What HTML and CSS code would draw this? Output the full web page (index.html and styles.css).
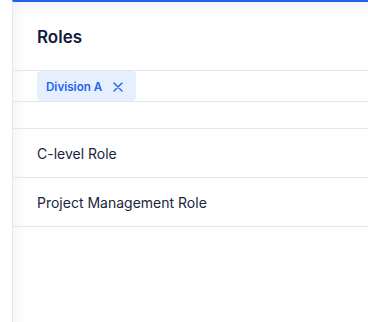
FILE: index.html
```html
<!DOCTYPE html>
<html lang="en">
<head>
  <meta charset="UTF-8">
  <meta name="viewport" content="width=device-width, initial-scale=1.0">
  <title>Roles</title>
  <link rel="stylesheet" href="styles.css">
</head>
<body>
<div class="panel">
  <div class="panel-header">
    <h1>Roles</h1>
  </div>
  <div class="filters">
    <span class="chip">
      Division A
      <svg class="chip-close" width="10" height="10" viewBox="0 0 10 10">
        <path d="M1 1 L9 9 M9 1 L1 9" stroke="currentColor" stroke-width="1.4" stroke-linecap="round" fill="none"/>
      </svg>
    </span>
  </div>
  <div class="spacer-row"></div>
  <ul class="role-list">
    <li>C-level Role</li>
    <li>Project Management Role</li>
  </ul>
</div>
</body>
</html>
```

FILE: styles.css
```css
body {
  font-family: Inter, "Noto Sans", sans-serif;
  margin: 0;
  padding: 0 0 0 12px;
  background-color: #fff;
  height: 322px;
  box-sizing: border-box;
}

.panel {
  height: 100%;
  border-top: 2px solid #1d63ed;
  border-left: 1px solid #e4e7f4;
  box-shadow: inset 10px 10px 14px -8px rgba(30, 40, 90, 0.07);
  box-sizing: border-box;
}

.panel-header {
  height: 66px;
  padding: 2px 0 0 24px;
  display: flex;
  align-items: center;
  border-bottom: 1px solid #e3e6ee;
}

h1 {
  margin: 0;
  font-size: 17px;
  font-weight: 600;
  color: #0f1b3d;
}

.filters {
  height: 30px;
  padding-left: 24px;
  display: flex;
  align-items: center;
  border-bottom: 1px solid #e3e6ee;
}

.chip {
  height: 30px;
  display: inline-flex;
  align-items: center;
  gap: 11px;
  padding: 1px 13px 0 9px;
  box-sizing: border-box;
  background-color: #e6effe;
  color: #1d63ed;
  font-size: 11.6px;
  font-weight: 600;
  border-radius: 4px;
}

.chip-close {
  display: block;
}

.spacer-row {
  height: 26px;
  border-bottom: 1px solid #e3e6ee;
}

.role-list {
  list-style: none;
  margin: 0;
  padding: 0;
}

.role-list li {
  height: 48px;
  padding-left: 24px;
  display: flex;
  align-items: center;
  font-size: 14px;
  color: #1b2540;
  border-bottom: 1px solid #e3e6ee;
}
```
